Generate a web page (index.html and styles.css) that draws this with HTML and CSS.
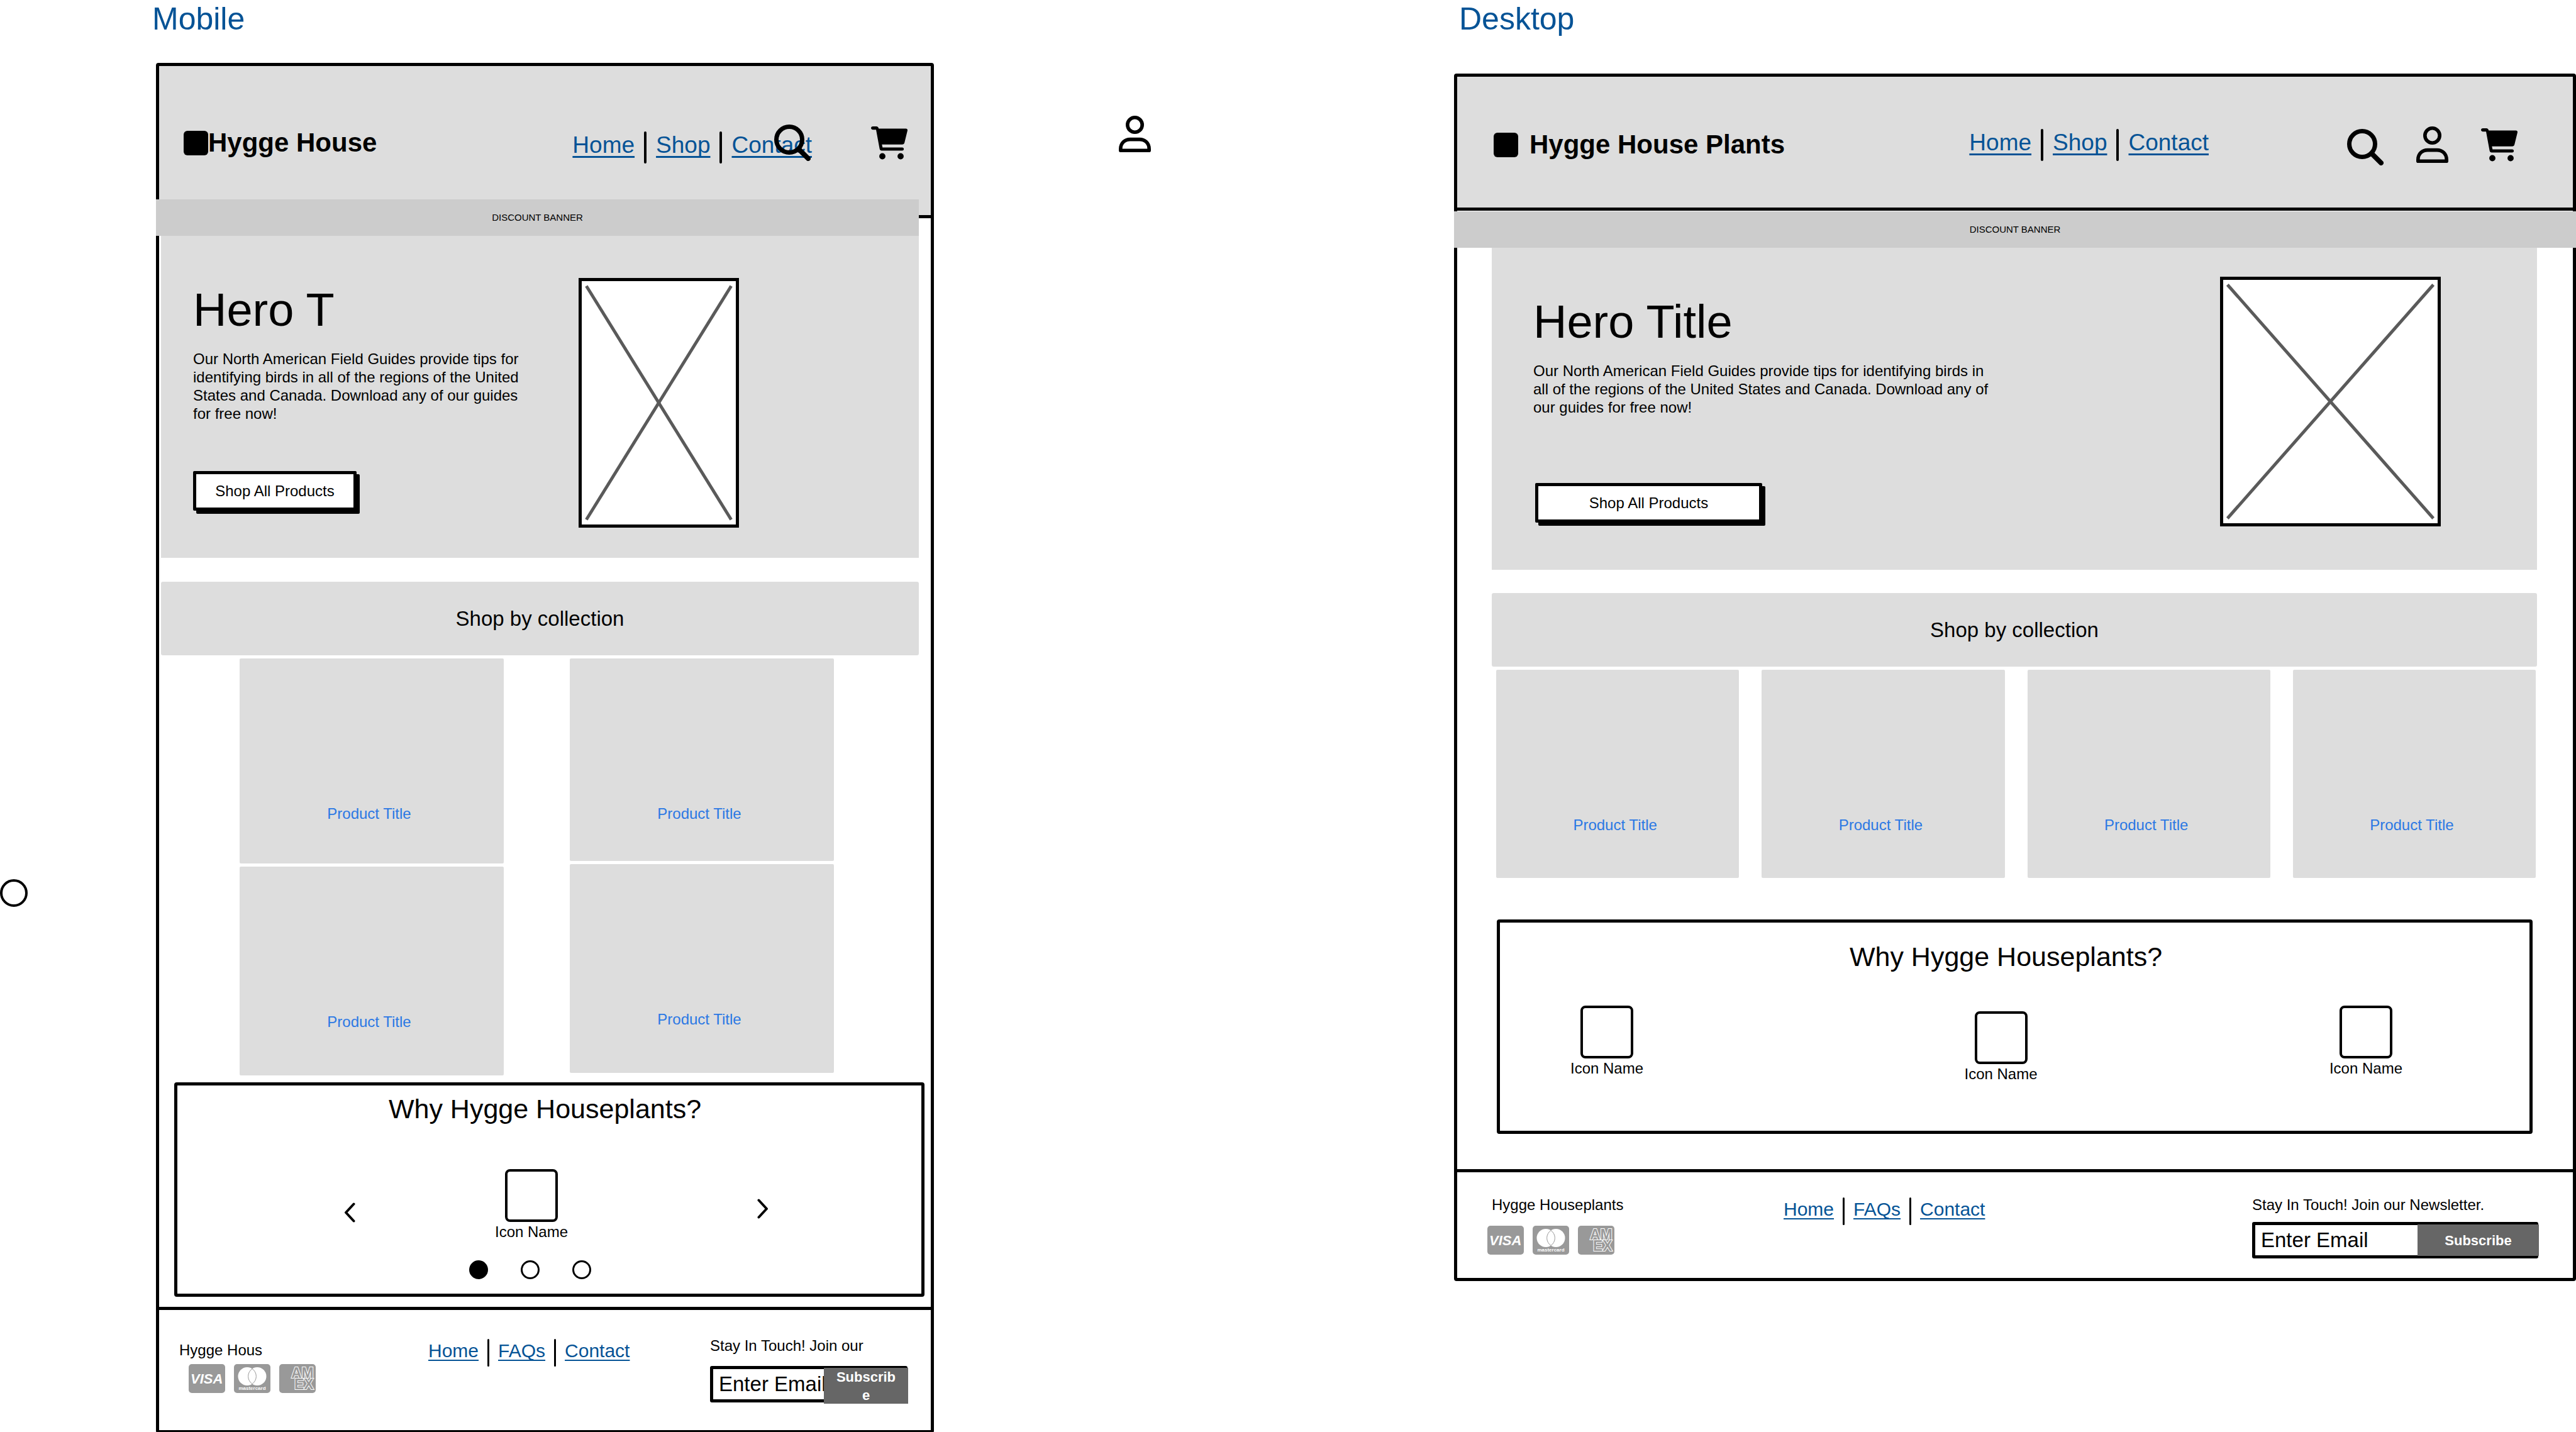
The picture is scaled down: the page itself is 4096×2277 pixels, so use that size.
FILE: index.html
```html
<!DOCTYPE html>
<html lang="en">
<head>
<meta charset="utf-8">
<title>Hygge House Plants wireframes</title>
<link rel="stylesheet" href="styles.css">
</head>
<body>
<svg width="0" height="0" class="defs" aria-hidden="true">
  <symbol id="search" viewBox="0 0 58 58">
    <circle cx="24" cy="24" r="20.5" fill="none" stroke="#000" stroke-width="7"/>
    <path d="M39 39L54 54" stroke="#000" stroke-width="8" stroke-linecap="round"/>
  </symbol>
  <symbol id="user" viewBox="0 0 51 58">
    <circle cx="25.5" cy="14.5" r="11.7" fill="none" stroke="#000" stroke-width="5.6"/>
    <path d="M2.8 55.2V53C2.8 43 10 37.600 18 37.600H33C41 37.600 48.200 43 48.200 53V55.200Z" fill="none" stroke="#000" stroke-width="5.600" stroke-linejoin="round"/>
  </symbol>
  <symbol id="cart" viewBox="0 0 58 53">
    <path d="M3 0H8.500C10.500 0 11.800 1.500 12.200 3.500H55.500C57.500 3.500 58.300 5 57.900 6.800L53.300 25.500C52.800 27.700 51.500 28.800 49.300 28.800H17.300L18.300 33.500H49.500C53 33.500 53 38.500 49.500 38.500H17C15 38.500 14 37.500 13.600 35.500L8 5.200H3C-1 5.200 -1 0 3 0Z"/>
    <circle cx="18" cy="47.500" r="4.900"/><circle cx="47" cy="47.500" r="4.900"/>
  </symbol>
</svg>

<main class="canvas">
  <div class="gutter gutter-left"><span class="ring"></span></div>

  <section class="board mobile">
    <h2 class="board-title">Mobile</h2>
    <div class="frame">
      <header class="header">
        <span class="logo"></span>
        <strong class="brand">Hygge House</strong>
        <nav class="links">
          <a href="#">Home</a><i></i><a href="#">Shop</a><i></i><a href="#">Contact</a>
        </nav>
        <div class="icons">
          <svg width="58" height="58" role="img" aria-label="Search"><use href="#search"/></svg>
          <svg width="58" height="53" role="img" aria-label="Cart"><use href="#cart"/></svg>
        </div>
      </header>
      <p class="banner">DISCOUNT BANNER</p>
      <section class="hero">
        <div class="hero-copy">
          <h1>Hero T</h1>
          <p>Our North American Field Guides provide tips for identifying birds in all of the regions of the United States and Canada. Download any of our guides for free now!</p>
          <button class="cta" type="button">Shop All Products</button>
        </div>
        <svg class="picture" role="img" aria-label="Image placeholder"><line x1="3%" y1="2%" x2="97%" y2="98%"/><line x1="97%" y1="2%" x2="3%" y2="98%"/></svg>
      </section>
      <h3 class="collection">Shop by collection</h3>
      <div class="products">
        <div class="column column-left">
          <a class="card" href="#">Product Title</a>
          <a class="card" href="#">Product Title</a>
        </div>
        <div class="column column-right">
          <a class="card" href="#">Product Title</a>
          <a class="card" href="#">Product Title</a>
        </div>
      </div>
      <section class="why">
        <h3>Why Hygge Houseplants?</h3>
        <div class="carousel">
          <button class="arrow arrow-prev" type="button" aria-label="Previous"><svg width="18" height="32" viewBox="0 0 18 32"><path d="M15.500 2.500L3 16L15.500 29.500"/></svg></button>
          <div class="feature"><span class="tile"></span><span>Icon Name</span></div>
          <button class="arrow arrow-next" type="button" aria-label="Next"><svg width="18" height="32" viewBox="0 0 18 32"><path d="M2.500 2.500L15 16L2.500 29.500"/></svg></button>
        </div>
        <div class="dots">
          <input type="radio" name="slide" aria-label="Slide 1" checked>
          <input type="radio" name="slide" aria-label="Slide 2">
          <input type="radio" name="slide" aria-label="Slide 3">
        </div>
      </section>
      <footer class="footer">
        <div class="about">
          <p>Hygge Hous</p>
          <div class="payments">
            <svg width="58" height="46" role="img" aria-label="Visa">
              <rect width="58" height="46" rx="5" fill="#999"/>
              <text x="3" y="31" class="visa-text">VISA</text>
            </svg>
            <svg width="58" height="46" role="img" aria-label="Mastercard">
              <rect width="58" height="46" rx="5" fill="#999"/>
              <circle cx="21" cy="19.500" r="14.500" fill="#fff"/><circle cx="37" cy="19.500" r="14.500" fill="#fff"/>
              <path d="M29 7.500A14.500 14.500 0 0 1 29 31.500A14.500 14.500 0 0 1 29 7.500Z" fill="#fff" stroke="#999" stroke-width="1"/>
              <text x="29" y="41" class="mc-text">mastercard</text>
            </svg>
            <svg width="58" height="46" role="img" aria-label="American Express">
              <rect width="58" height="46" rx="5" fill="#999"/>
              <text x="19" y="22" class="amex-text">AM</text>
              <text x="24" y="40" class="amex-text">EX</text>
            </svg>
          </div>
        </div>
        <nav class="links links-small">
          <a href="#">Home</a><i></i><a href="#">FAQs</a><i></i><a href="#">Contact</a>
        </nav>
        <form class="newsletter">
          <label for="email-m">Stay In Touch! Join our</label>
          <div class="field"><input id="email-m" type="email" placeholder="Enter Email"><button type="button">Subscribe</button></div>
        </form>
      </footer>
    </div>
  </section>

  <div class="gutter gutter-middle"><svg width="51" height="58" role="img" aria-label="Account"><use href="#user"/></svg></div>

  <section class="board desktop">
    <h2 class="board-title">Desktop</h2>
    <div class="frame">
      <header class="header">
        <span class="logo"></span>
        <strong class="brand">Hygge House Plants</strong>
        <nav class="links">
          <a href="#">Home</a><i></i><a href="#">Shop</a><i></i><a href="#">Contact</a>
        </nav>
        <div class="icons">
          <svg width="58" height="66" viewBox="0 0 58 66" role="img" aria-label="Search"><use href="#search" y="8" width="58" height="58"/></svg>
          <svg width="51" height="58" role="img" aria-label="Account"><use href="#user"/></svg>
          <svg width="58" height="53" role="img" aria-label="Cart"><use href="#cart"/></svg>
        </div>
      </header>
      <p class="banner">DISCOUNT BANNER</p>
      <section class="hero">
        <div class="hero-copy">
          <h1>Hero Title</h1>
          <p>Our North American Field Guides provide tips for identifying birds in all of the regions of the United States and Canada. Download any of our guides for free now!</p>
          <button class="cta" type="button">Shop All Products</button>
        </div>
        <svg class="picture" role="img" aria-label="Image placeholder"><line x1="2%" y1="2%" x2="98%" y2="98%"/><line x1="98%" y1="2%" x2="2%" y2="98%"/></svg>
      </section>
      <h3 class="collection">Shop by collection</h3>
      <div class="products">
        <a class="card" href="#">Product Title</a>
        <a class="card" href="#">Product Title</a>
        <a class="card" href="#">Product Title</a>
        <a class="card" href="#">Product Title</a>
      </div>
      <section class="why">
        <h3>Why Hygge Houseplants?</h3>
        <div class="features">
          <div class="feature"><span class="tile"></span><span>Icon Name</span></div>
          <div class="feature feature-low"><span class="tile"></span><span>Icon Name</span></div>
          <div class="feature"><span class="tile"></span><span>Icon Name</span></div>
        </div>
      </section>
      <footer class="footer">
        <div class="about">
          <p>Hygge Houseplants</p>
          <div class="payments">
            <svg width="58" height="46" role="img" aria-label="Visa">
              <rect width="58" height="46" rx="5" fill="#999"/>
              <text x="3" y="31" class="visa-text">VISA</text>
            </svg>
            <svg width="58" height="46" role="img" aria-label="Mastercard">
              <rect width="58" height="46" rx="5" fill="#999"/>
              <circle cx="21" cy="19.500" r="14.500" fill="#fff"/><circle cx="37" cy="19.500" r="14.500" fill="#fff"/>
              <path d="M29 7.500A14.500 14.500 0 0 1 29 31.500A14.500 14.500 0 0 1 29 7.500Z" fill="#fff" stroke="#999" stroke-width="1"/>
              <text x="29" y="41" class="mc-text">mastercard</text>
            </svg>
            <svg width="58" height="46" role="img" aria-label="American Express">
              <rect width="58" height="46" rx="5" fill="#999"/>
              <text x="19" y="22" class="amex-text">AM</text>
              <text x="24" y="40" class="amex-text">EX</text>
            </svg>
          </div>
        </div>
        <nav class="links links-small">
          <a href="#">Home</a><i></i><a href="#">FAQs</a><i></i><a href="#">Contact</a>
        </nav>
        <form class="newsletter">
          <label for="email-d">Stay In Touch! Join our Newsletter.</label>
          <div class="field"><input id="email-d" type="email" placeholder="Enter Email"><button type="button">Subscribe</button></div>
        </form>
      </footer>
    </div>
  </section>
</main>
</body>
</html>
```
FILE: styles.css
```css
* { box-sizing: border-box; margin: 0; }

body {
  background: #fff;
  color: #000;
  font: 24px/29px "Liberation Sans", Arial, sans-serif;
}

svg { display: block; flex: none; overflow: hidden; }
.defs { position: absolute; }
button, input { font: inherit; color: inherit; border: 0; border-radius: 0; padding: 0; background: none; }

/* Canvas */
.canvas {
  display: grid;
  grid-template-columns: minmax(0, 248fr) minmax(0, 1237fr) minmax(0, 827fr) minmax(0, 1784fr);
  align-items: start;
}
.gutter-left { padding-top: 1398px; }
.gutter-middle { padding: 184px 0 0 294px; }
.ring { display: block; width: 44px; height: 44px; border: 4px solid #000; border-radius: 50%; }

.board-title { font-size: 50px; line-height: 60px; font-weight: 400; color: #055396; }
.mobile .board-title { margin: 0 0 40px -6px; }
.desktop .board-title { margin: 0 0 57px 8px; }
.frame { border: 5px solid #000; border-radius: 4px; }

/* Header */
.header {
  display: flex;
  align-items: center;
  background: #ddd;
  border-bottom: 5px solid #000;
}
.mobile .header { height: 242px; padding: 7px 37px 0 39px; }
.desktop .header { height: 213px; padding: 8px 88px 0 58px; }
.logo { flex: none; width: 39px; height: 39px; border-radius: 6px; background: #000; }
.brand { font-size: 42px; line-height: 48px; white-space: nowrap; }
.desktop .brand { margin-left: 18px; }

.links { display: flex; align-items: flex-start; font-size: 37px; line-height: 44px; }
.links a {
  color: #055396;
  text-decoration: underline 3px;
  text-underline-offset: 5px;
  text-decoration-skip-ink: none;
}
.links i { width: 4px; height: 51px; margin: 0 15px; border-radius: 2px; background: #000; }
.links-small { font-size: 30px; line-height: 38px; }
.links-small a { text-decoration-thickness: 2px; text-underline-offset: 4px; }
.links-small i { width: 3px; height: 44px; margin: 0 14px; }
.header .links { margin-left: auto; }
.mobile .header .links { margin-top: 14px; }

.icons { display: flex; align-items: center; position: relative; }
.mobile .icons { gap: 96px; margin-left: -60px; }
.desktop .icons { gap: 52px; margin-left: 220px; }

.banner {
  position: relative;
  height: 58px;
  background: #ccc;
  font-size: 15px;
  line-height: 58px;
  text-align: center;
}
.mobile .banner { margin: -30px 19px 0 -5px; }
.desktop .banner { margin: 1px -5px 0; }

/* Hero */
.hero { display: flex; justify-content: space-between; align-items: flex-start; height: 512px; background: #ddd; }
.mobile .hero { margin: 0 19px 0 3px; padding: 0 286px 0 51px; }
.desktop .hero { margin: 0 57px 0 55px; padding: 0 153px 0 66px; }
.hero-copy { padding-top: 78px; }
.mobile .hero-copy { width: 535px; }
.desktop .hero-copy { width: 740px; }
.hero h1 { font-size: 74px; line-height: 80px; font-weight: 400; margin-bottom: 23px; }
.hero p { min-height: 193px; }
.cta {
  height: 63px;
  background: #fff;
  border: 5px solid #000;
  border-radius: 2px;
  box-shadow: 5px 5px 0 #000;
}
.mobile .cta { width: 260px; }
.desktop .cta { width: 361px; margin-left: 3px; }
.picture { height: 397px; background: #fff; border: 5px solid #000; }
.picture line { stroke: #5a5a5a; stroke-width: 5; }
.mobile .picture { width: 255px; margin-top: 67px; }
.desktop .picture { width: 351px; margin-top: 46px; }

/* Collection */
.collection {
  height: 117px;
  background: #ddd;
  border-radius: 3px;
  font-size: 33px;
  line-height: 117px;
  font-weight: 400;
  text-align: center;
}
.mobile .collection { margin: 38px 19px 0 3px; }
.desktop .collection { margin: 37px 57px 0 55px; }
.products { display: grid; margin-top: 5px; }
.mobile .products { grid-template-columns: 1fr 1fr; gap: 105px; padding: 0 154px 0 128px; }
.desktop .products { grid-template-columns: repeat(4, 1fr); grid-auto-rows: 331px; gap: 36px; padding: 0 59px 0 62px; }
.column { display: grid; gap: 5px; align-content: start; }
.column-left { grid-template-rows: 326px 332px; }
.column-right { grid-template-rows: 322px 332px; }
.card {
  padding: 232px 8px 0 0;
  background: #ddd;
  border-radius: 2px;
  color: #2b78e4;
  text-align: center;
  text-decoration: none;
}

/* Why */
.why { height: 341px; border: 5px solid #000; border-radius: 4px; }
.mobile .why { margin: 11px 10px 0 24px; padding-top: 12px; }
.desktop .why { margin: 66px 64px 0 63px; padding-top: 29px; }
.why h3 { font-size: 43px; line-height: 50px; font-weight: 400; text-align: center; }
.mobile .why h3 { padding-right: 14px; }
.desktop .why h3 { padding-right: 28px; }
.feature { display: flex; flex-direction: column; align-items: center; gap: 1px; white-space: nowrap; }
.tile { width: 84px; height: 84px; border: 4px solid #000; border-radius: 8px; }
.features {
  display: grid;
  grid-template-columns: 626fr 580fr auto;
  justify-items: start;
  align-items: start;
  margin-top: 53px;
  padding: 0 202px 0 112px;
}
.feature-low { margin-top: 9px; }
.carousel { display: flex; align-items: center; margin-top: 71px; padding: 0 243px 0 265px; }
.carousel .feature { margin: 0 auto 0 222px; }
.arrow path { fill: none; stroke: #000; stroke-width: 4; stroke-linecap: round; stroke-linejoin: round; }
.arrow-prev { padding-top: 24px; }
.arrow-next { padding-top: 12px; }
.dots { display: flex; justify-content: center; gap: 52px; margin-top: 31px; padding-right: 61px; }
.dots input { appearance: none; width: 30px; height: 30px; border: 3px solid #000; border-radius: 50%; }
.dots input:checked { background: #000; }

/* Footer */
.footer { display: grid; align-items: start; border-top: 5px solid #000; }
.mobile .footer {
  grid-template-columns: minmax(0, 396fr) minmax(0, 448fr) minmax(0, 314fr);
  height: 196px;
  margin-top: 16px;
  padding: 42px 37px 0 32px;
}
.desktop .footer {
  grid-template-columns: minmax(0, 471fr) minmax(0, 745fr) minmax(0, 455fr);
  height: 173px;
  margin-top: 56px;
  padding: 37px 55px 0 48px;
}
.payments { display: flex; gap: 14px; }
.mobile .about { padding-top: 7px; }
.mobile .payments { padding: 8px 0 0 15px; }
.desktop .about p { padding-left: 7px; }
.desktop .payments { padding-top: 19px; }
.mobile .footer .links { padding-top: 4px; }
.desktop .footer .links { padding-top: 3px; }
.visa-text { font: italic 700 22px "Liberation Sans", Arial, sans-serif; fill: #fff; }
.mc-text { font: 700 8px "Liberation Sans", Arial, sans-serif; fill: #fff; text-anchor: middle; }
.amex-text { font: 700 23px "Liberation Sans", Arial, sans-serif; fill: #999; stroke: #fff; stroke-width: 2px; paint-order: stroke; }

.newsletter label { display: block; white-space: nowrap; }
.field { display: flex; height: 58px; border: 5px solid #000; border-radius: 3px; }
.mobile .field { margin-top: 18px; }
.desktop .field { margin-top: 13px; }
.field input { flex: 1; min-width: 0; padding-left: 9px; font-size: 33px; outline: 0; }
.field input::placeholder { color: #000; opacity: 1; }
.field button { flex: none; background: #666; color: #fff; font-size: 22px; line-height: 29px; font-weight: 700; }
.mobile .field button { width: 134px; margin: -2px -6px -7px 0; padding: 0 16px; word-break: break-all; }
.desktop .field button { width: 193px; margin: -1px -6px -1px 0; }
```
